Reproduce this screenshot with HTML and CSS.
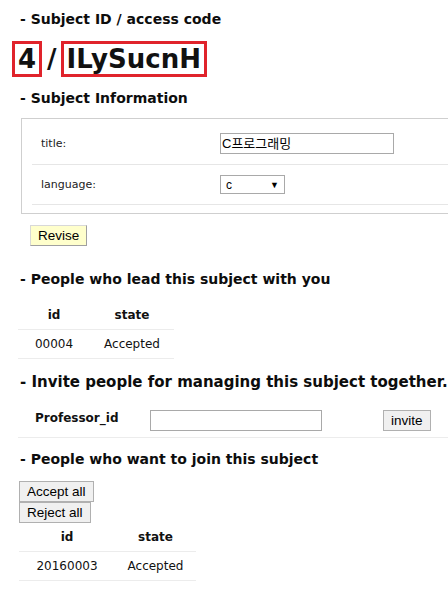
FILE: index.html
```html
<!DOCTYPE html>
<html>
<head>
<meta charset="utf-8">
<link rel="stylesheet" href="styles.css">
</head>
<body>
<div class="page">
  <h3 class="sec sec-first">- Subject ID / access code</h3>
  <div class="code"><span class="box box-id">4</span><span class="slash">/</span><span class="box box-code">ILySucnH</span></div>

  <h3 class="sec sec-info">- Subject Information</h3>
  <div class="panel">
    <div class="frow frow-1">
      <span class="flabel">title:</span>
      <span class="finput">C프로그래밍</span>
    </div>
    <div class="frow frow-2">
      <span class="flabel">language:</span>
      <span class="fselect"><span>c</span><span class="arrow">▼</span></span>
    </div>
  </div>
  <div class="revise-wrap"><span class="btn btn-revise">Revise</span></div>

  <h3 class="sec sec-lead">- People who lead this subject with you</h3>
  <div class="tbl tbl-lead">
    <div class="trow thead"><span class="c1">id</span><span class="c2">state</span></div>
    <div class="trow"><span class="c1">00004</span><span class="c2">Accepted</span></div>
  </div>

  <h3 class="sec sec-invite">- Invite people for managing this subject together.</h3>
  <div class="invite">
    <span class="ilabel">Professor_id</span>
    <span class="iinput"></span>
    <span class="btn btn-invite">invite</span>
  </div>

  <h3 class="sec sec-join">- People who want to join this subject</h3>
  <div class="btns">
    <span class="btn btn-accept">Accept all</span>
    <span class="btn btn-reject">Reject all</span>
  </div>
  <div class="tbl tbl-join">
    <div class="trow thead"><span class="c1">id</span><span class="c2">state</span></div>
    <div class="trow"><span class="c1">20160003</span><span class="c2">Accepted</span></div>
  </div>
</div>
</body>
</html>
```
FILE: styles.css
```css
html, body {
  margin: 0;
  padding: 0;
  overflow: hidden;
  background: #fff;
}
body {
  width: 448px;
  height: 593px;
  font-family: "DejaVu Sans", Verdana, sans-serif;
  color: #111;
}
.page {
  width: 448px;
  overflow: hidden;
  display: flex;
  flex-direction: column;
  align-items: flex-start;
}
.sec {
  margin: 0;
  font-size: 14px;
  font-weight: bold;
  line-height: 18px;
  padding-left: 20px;
  white-space: nowrap;
  color: #0d0d0d;
}
.sec-first { margin-top: 10px; }
.code {
  margin-top: 13px;
  margin-left: 12px;
  font-size: 26px;
  font-weight: bold;
  line-height: 30px;
  display: flex;
  align-items: center;
  white-space: nowrap;
}
.slash { margin: 0 4px 0 5px; }
.box {
  border: 3px solid #e0232b;
  padding: 0 3px;
  display: inline-block;
}
.sec-info { margin-top: 12px; }
.panel {
  margin-top: 11px;
  margin-left: 21px;
  width: 460px;
  flex-shrink: 0;
  border: 1px solid #cfcfcf;
  padding: 0 0 8px 10px;
  box-sizing: border-box;
}
.frow {
  display: flex;
  align-items: center;
  border-bottom: 1px solid #e6e6e6;
  font-size: 11px;
  color: #222;
  box-sizing: border-box;
}
.frow-1 { height: 46px; padding-top: 4px; }
.frow-2 { height: 40px; }
.flabel {
  width: 179px;
  padding-left: 9px;
}
.finput {
  width: 171px;
  height: 19px;
  border: 1px solid #a9a9a9;
  font-family: "Liberation Sans", "Noto Sans CJK KR", sans-serif;
  font-size: 13px;
  line-height: 19px;
  padding-left: 1px;
  color: #000;
}
.fselect {
  width: 65px;
  height: 19px;
  border: 1px solid #a9a9a9;
  display: flex;
  justify-content: space-between;
  align-items: center;
  padding: 0 5px 0 5px;
  box-sizing: border-box;
  font-family: "Liberation Sans", sans-serif;
  font-size: 12px;
  color: #000;
}
.arrow { font-size: 9px; }
.btn {
  display: inline-block;
  font-family: "Liberation Sans", Arial, sans-serif;
  font-size: 13.5px;
  line-height: 19px;
  border: 1px solid #b0b0b0;
  background: #f0f0f0;
  color: #000;
  padding: 0 7px;
  white-space: nowrap;
}
.revise-wrap { margin-top: 11px; margin-left: 30px; }
.btn-revise {
  background: #ffffcc;
  border-color: #d8d8d8 #a0a0a0 #a0a0a0 #d8d8d8;
}
.sec-lead { margin-top: 24px; }
.tbl {
  display: flex;
  flex-direction: column;
  font-size: 12px;
}
.trow {
  display: flex;
  border-bottom: 1px solid #ececec;
  height: 28px;
  align-items: center;
}
.thead { font-weight: bold; }
.tbl-lead { margin-top: 13px; margin-left: 18px; width: 156px; }
.tbl-lead .c1 { width: 72px; text-align: center; }
.tbl-lead .c2 { width: 84px; text-align: center; }
.sec-invite { margin-top: 14px; font-size: 15px; }
.invite {
  margin-top: 20px;
  margin-left: 18px;
  width: 460px;
  flex-shrink: 0;
  height: 26px;
  display: flex;
  align-items: flex-start;
  border-bottom: 1px solid #ececec;
}
.ilabel {
  font-size: 12px;
  font-weight: bold;
  width: 115px;
  padding-left: 17px;
  line-height: 17px;
  margin-top: -1px;
}
.iinput {
  width: 170px;
  height: 19px;
  border: 1px solid #a9a9a9;
  margin-top: -1px;
}
.btn-invite { margin-left: 61px; margin-top: -1px; }
.sec-join { margin-top: 12px; }
.btns {
  margin-top: 13px;
  margin-left: 19px;
  display: flex;
  flex-direction: column;
  align-items: flex-start;
  gap: 0;
}
.tbl-join { margin-left: 19px; width: 177px; margin-top: 0; }
.tbl-join .c1 { width: 96px; text-align: center; }
.tbl-join .c2 { width: 81px; text-align: center; }
```
